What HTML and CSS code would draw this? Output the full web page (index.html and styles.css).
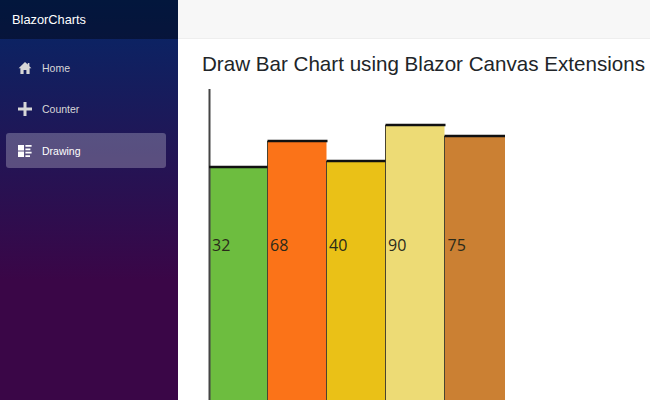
FILE: index.html
```html
<!DOCTYPE html>
<html lang="en">
<head>
<meta charset="utf-8">
<title>BlazorCharts</title>
<link rel="stylesheet" href="styles.css">
</head>
<body>
<div class="page">
  <aside class="sidebar">
    <div class="brand">BlazorCharts</div>
    <nav class="nav">
      <a class="nav-item"><svg class="icon" viewBox="0 0 14 14"><path d="M7 1 0.6 7.2H2.4V13H5.6V9H8.4V13H11.6V7.2H13.4L11.4 5.2V2H9.8V3.6Z"/></svg>Home</a>
      <a class="nav-item"><svg class="icon" viewBox="0 0 14 14"><path d="M5.5 0H8.5V5.5H14V8.5H8.5V14H5.5V8.5H0V5.5H5.5Z"/></svg>Counter</a>
      <a class="nav-item active"><svg class="icon" viewBox="0 0 14 14"><path d="M0 1H6V6.4H0ZM0 7.6H6V13H0ZM7.4 1H13.6V2.8H7.4ZM7.4 4.4H12.4V6.2H7.4ZM7.4 7.8H13.6V9.4H7.4ZM7.4 11.2H12V13H7.4Z"/></svg>Drawing</a>
    </nav>
  </aside>
  <main class="main">
    <div class="topbar"></div>
    <div class="content">
      <h1 class="title">Draw Bar Chart using Blazor Canvas Extensions</h1>
      <svg class="chart" width="320" height="320" viewBox="0 0 320 320">
        <g class="bars">
          <rect x="8" y="78" width="58.5" height="260" fill="#6dbd3f"/>
          <rect x="66.5" y="52" width="59" height="290" fill="#fb7318"/>
          <rect x="125.5" y="72" width="59" height="270" fill="#eac117"/>
          <rect x="184.5" y="36" width="59" height="300" fill="#eddb75"/>
          <rect x="243.5" y="47" width="60.5" height="290" fill="#cb8033"/>
        </g>
        <g class="edges">
          <path d="M66.5 52V320M125.5 72V320M184.5 36V320M243.5 47V320"/>
        </g>
        <path class="axis" d="M8.5 0V320"/>
        <g class="tops">
          <path d="M8 78H66.5M66.5 52H126.5M125.5 72H184.5M184.5 36H244.5M243.5 47H304"/>
        </g>
        <g class="labels">
          <text x="11" y="162">32</text>
          <text x="69" y="162">68</text>
          <text x="128" y="162">40</text>
          <text x="187" y="162">90</text>
          <text x="246.5" y="162">75</text>
        </g>
      </svg>
    </div>
  </main>
</div>
</body>
</html>
```

FILE: styles.css
```css
* { box-sizing: border-box; }
html, body { margin: 0; height: 100%; overflow: hidden; }
body { font-family: "Liberation Sans", Arial, sans-serif; background: #fff; color: #212529; }
.page { display: flex; width: 650px; height: 400px; }
.sidebar { width: 178px; flex: none; height: 400px; background: linear-gradient(180deg, #052767 0%, #3a0647 70%); color: #fff; }
.brand { height: 39px; padding: 0 12px; display: flex; align-items: center; background: rgba(0,0,0,.4); font-size: 12.8px; color: #fff; }
.nav { padding: 11px 12px 0 6px; display: flex; flex-direction: column; gap: 6.5px; }
.nav-item { height: 35px; display: flex; align-items: center; padding-left: 12px; font-size: 10.5px; color: #d7d7d7; border-radius: 3px; }
.nav-item.active { background: rgba(255,255,255,.25); color: #fff; }
.icon { width: 14px; height: 14px; margin-right: 10px; fill: currentColor; flex: none; }
.main { flex: 1; min-width: 0; }
.topbar { height: 39px; background: #f7f7f7; border-bottom: 1px solid #eee; }
.content { padding: 13px 0 0 24px; }
.title { margin: 0; font-size: 20.6px; line-height: 24px; font-weight: 400; white-space: nowrap; }
.chart { display: block; margin: 13px 0 0 -1px; overflow: hidden; }
.edges path { stroke: #4a4430; stroke-width: 1; fill: none; }
.axis { stroke: #444; stroke-width: 2; fill: none; }
.tops path { stroke: #111; stroke-width: 2.4; fill: none; }
.labels text { font-family: "Open Sans", sans-serif; font-size: 16px; fill: #2a2a1a; }
```
